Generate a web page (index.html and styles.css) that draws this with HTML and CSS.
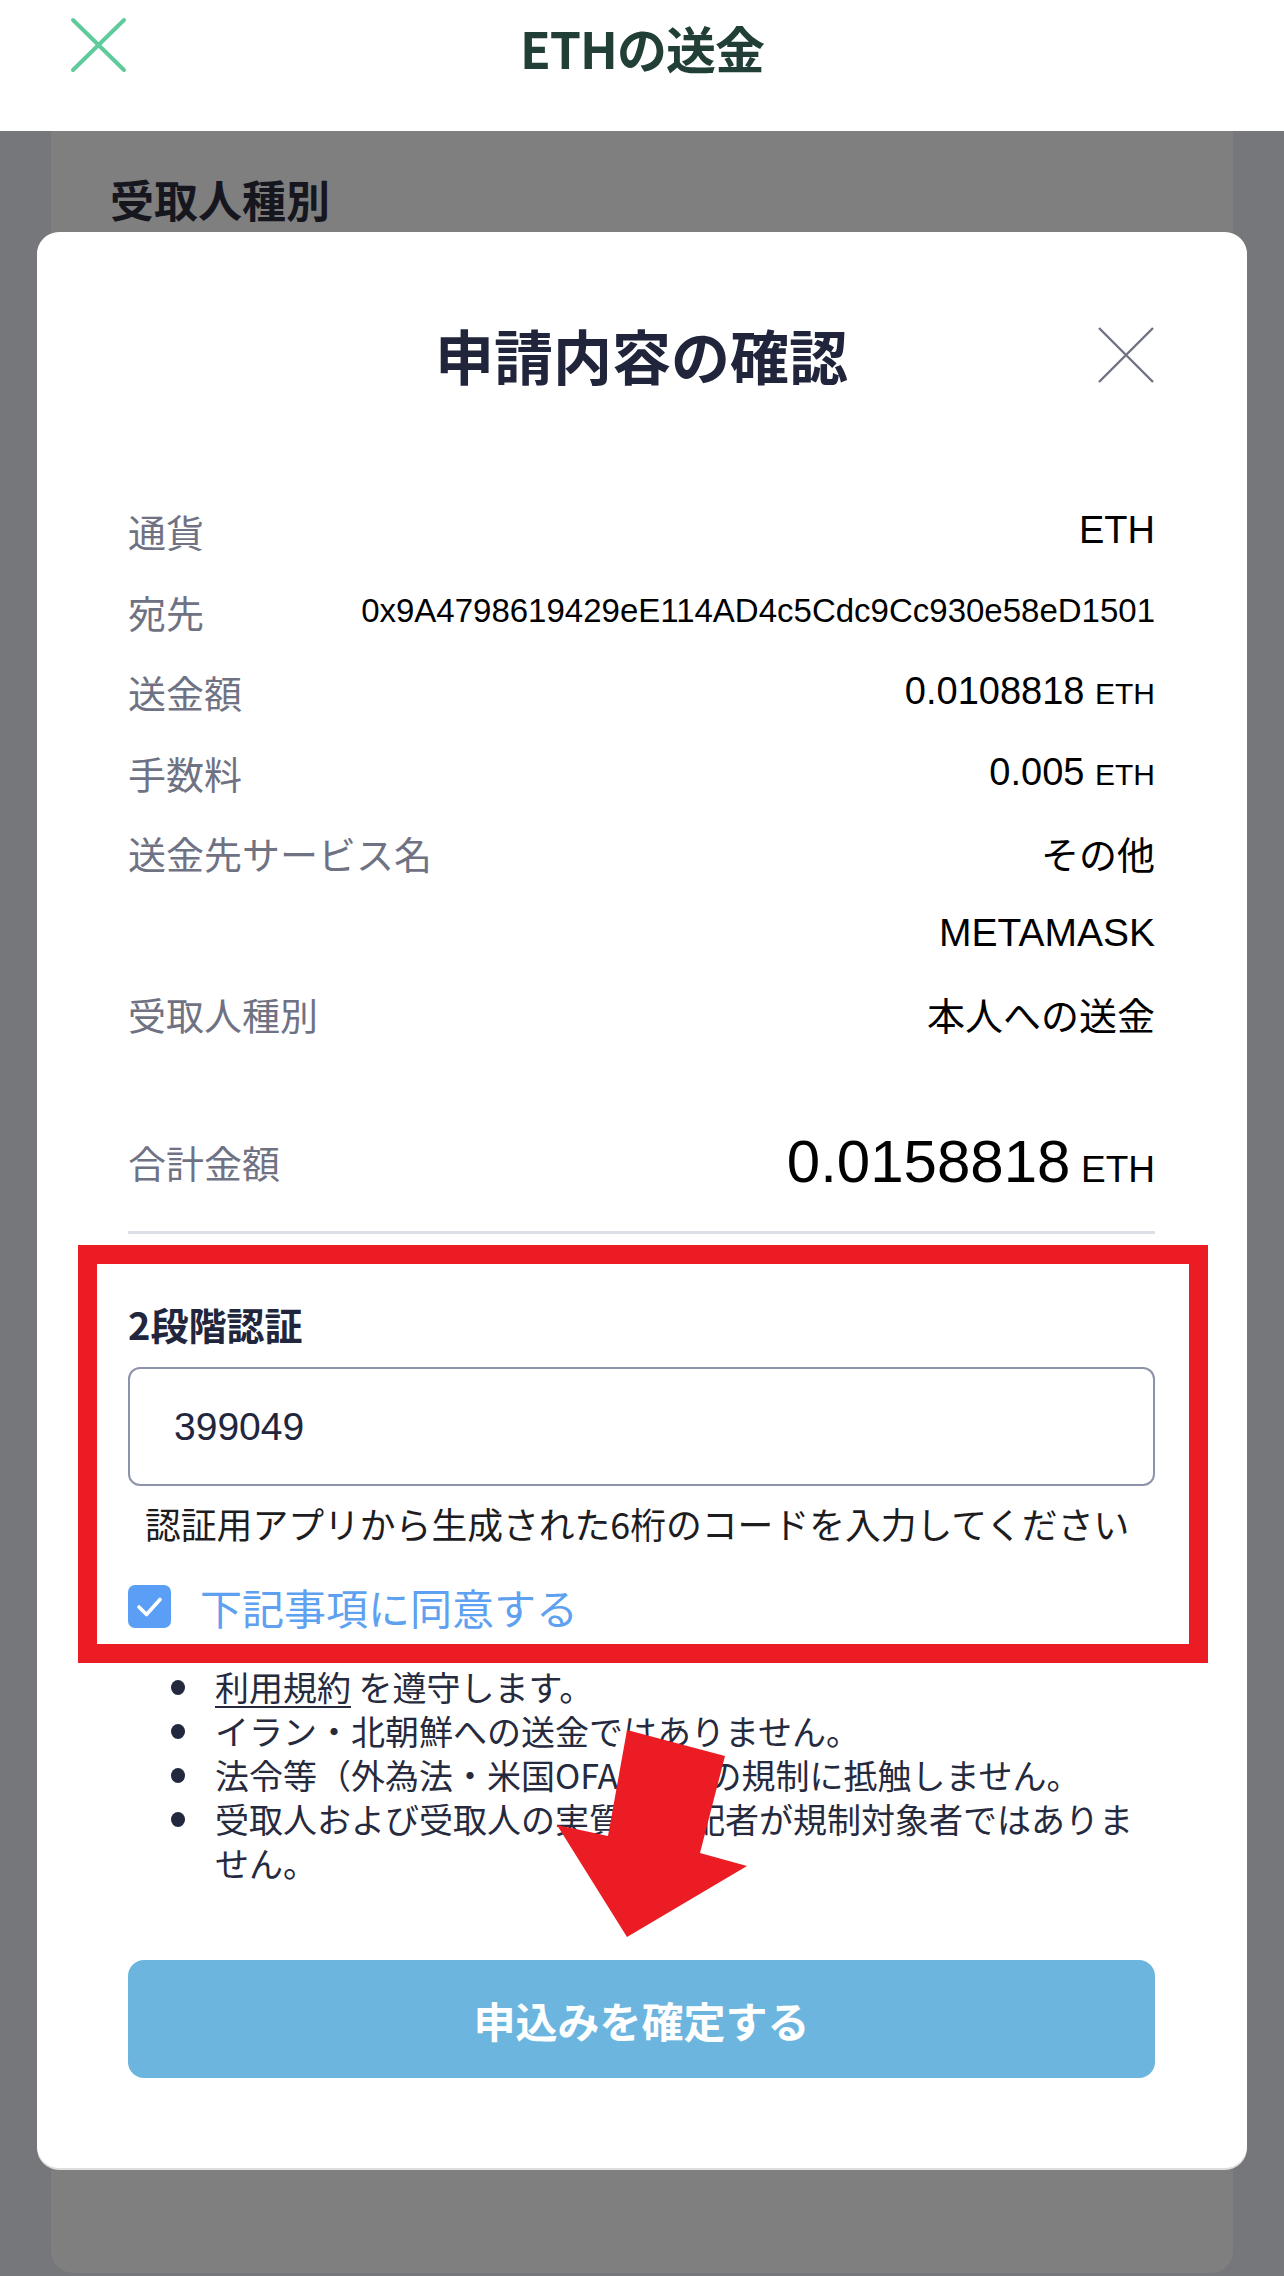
FILE: index.html
```html
<!DOCTYPE html>
<html lang="ja">
<head>
<meta charset="utf-8">
<title>ETHの送金</title>
<link rel="stylesheet" href="styles.css">
</head>
<body>
<div class="page">
  <header class="topbar">
    <svg class="top-close" viewBox="0 0 57 56" width="57" height="56" aria-hidden="true">
      <path d="M3 3 L54 53 M54 3 L3 53" stroke="#5fcb9b" stroke-width="4" stroke-linecap="round" fill="none"/>
    </svg>
    <div class="top-title">ETHの送金</div>
    <div class="top-spacer"></div>
  </header>

  <div class="backdrop">
    <section class="bgcard">
      <h2 class="bg-heading">受取人種別</h2>
    </section>
  </div>

  <div class="modal">
    <div class="modal-head">
      <div class="head-spacer"></div>
      <h1 class="modal-title">申請内容の確認</h1>
      <svg class="modal-close" viewBox="0 0 58 58" width="58" height="58" aria-hidden="true">
        <path d="M2 2 L56 56 M56 2 L2 56" stroke="#6f7282" stroke-width="2.4" fill="none"/>
      </svg>
    </div>

    <div class="rows">
      <div class="row"><span class="label">通貨</span><span class="value">ETH</span></div>
      <div class="row"><span class="label">宛先</span><span class="value addr">0x9A4798619429eE114AD4c5Cdc9Cc930e58eD1501</span></div>
      <div class="row"><span class="label">送金額</span><span class="value">0.0108818 <span class="unit">ETH</span></span></div>
      <div class="row"><span class="label">手数料</span><span class="value">0.005 <span class="unit">ETH</span></span></div>
      <div class="row"><span class="label">送金先サービス名</span><span class="value">その他</span></div>
      <div class="row"><span class="label"></span><span class="value wide">METAMASK</span></div>
      <div class="row"><span class="label">受取人種別</span><span class="value">本人への送金</span></div>
    </div>

    <div class="row total"><span class="label">合計金額</span><span class="value"><span class="big">0.0158818</span> <span class="unit-big">ETH</span></span></div>
    <div class="rule"></div>

    <section class="tfa">
      <h3 class="tfa-title">2段階認証</h3>
      <div class="code">399049</div>
      <p class="hint">認証用アプリから生成された6桁のコードを入力してください</p>
      <div class="agree">
        <span class="checkbox">
          <svg viewBox="0 0 43 43" width="43" height="43" aria-hidden="true">
            <path d="M11 22 L18.5 29.5 L32 14.5" stroke="#fff" stroke-width="3.6" stroke-linecap="round" stroke-linejoin="round" fill="none"/>
          </svg>
        </span>
        <span class="agree-text">下記事項に同意する</span>
      </div>
    </section>

    <ul class="terms">
      <li><span class="link">利用規約</span> を遵守します。</li>
      <li>イラン・北朝鮮への送金ではありません。</li>
      <li>法令等（外為法・米国OFAC等）の規制に抵触しません。</li>
      <li>受取人および受取人の実質的支配者が規制対象者ではありません。</li>
    </ul>

    <div class="submit">申込みを確定する</div>
  </div>

  <svg class="arrow" viewBox="0 0 205 218" width="205" height="218" aria-hidden="true">
    <polygon points="77,5 175,31 150,128 197,141 77,212 7,100 58,111" fill="#ec1c24"/>
  </svg>
</div>
</body>
</html>
```

FILE: styles.css
```css
* { box-sizing: border-box; }

html, body {
  margin: 0;
  padding: 0;
}

body {
  width: 1284px;
  height: 2276px;
  overflow: hidden;
  background: #76777a;
  font-family: "Noto Sans CJK JP", sans-serif;
}

.page {
  position: relative;
  height: 2276px;
}

/* top bar */
.topbar {
  height: 131px;
  background: #fff;
  display: grid;
  grid-template-columns: 1fr auto 1fr;
  align-items: start;
  padding: 17px 70px 0;
}

.top-close { display: block; }

.top-title {
  font-size: 50px;
  line-height: 60px;
  font-weight: 700;
  color: #213f36;
  letter-spacing: -1px;
}

/* dimmed page behind */
.backdrop {
  padding: 0 51px;
}

.bgcard {
  height: 2142px;
  background: #7f7f7f;
  border-radius: 0 0 22px 22px;
  padding: 38px 0 0 59px;
}

.bg-heading {
  margin: 0;
  font-size: 44px;
  line-height: 60px;
  font-weight: 700;
  color: #16161f;
}

/* modal */
.modal {
  position: absolute;
  left: 37px;
  top: 232px;
  width: 1210px;
  background: #fff;
  border-radius: 22px;
  padding: 83px 92px 90px 91px;
  box-shadow: 0 2px 0 #dedede;
}

.modal-head {
  display: grid;
  grid-template-columns: 1fr auto 1fr;
  align-items: center;
  height: 80px;
}

.modal-title {
  margin: 0;
  font-size: 59px;
  line-height: 80px;
  font-weight: 700;
  color: #21253c;
}

.modal-close {
  justify-self: end;
  display: block;
}

.rows {
  margin-top: 95.5px;
}

.row {
  display: flex;
  justify-content: space-between;
  align-items: center;
  height: 80.5px;
}

.label {
  font-size: 38px;
  color: #6f7283;
  white-space: nowrap;
}

.value {
  font-family: "Liberation Sans", "Noto Sans CJK JP", sans-serif;
  font-size: 38px;
  color: #000;
  white-space: nowrap;
}

.value.addr {
  font-size: 33px;
}

.value.wide {
  font-size: 39px;
}

.unit {
  font-size: 30px;
}

.total {
  margin-top: 57px;
  height: 100px;
}

.big {
  font-size: 60px;
}

.unit-big {
  font-size: 37px;
}

.rule {
  margin-top: 20px;
  height: 3px;
  background: #dcdfe6;
}

/* two-factor block (highlighted) */
.tfa {
  margin: 11px -53px 0 -50px;
  border: 19px solid #ec1c24;
  padding: 35px 34px 13px 31px;
}

.tfa-title {
  margin: 0;
  font-size: 38px;
  line-height: 50px;
  font-weight: 700;
  color: #22263d;
}

.code {
  margin-top: 18px;
  height: 119px;
  border: 2px solid #8d93ab;
  border-radius: 12px;
  padding-left: 44px;
  display: flex;
  align-items: center;
  font-family: "Liberation Sans", sans-serif;
  font-size: 39px;
  color: #22263d;
}

.hint {
  margin: 12px 0 0;
  padding-left: 17px;
  font-size: 35.8px;
  line-height: 50px;
  color: #1d1d1f;
  white-space: nowrap;
}

.agree {
  margin-top: 33px;
  height: 50px;
  display: flex;
  align-items: center;
  gap: 29px;
}

.checkbox {
  width: 43px;
  height: 43px;
  border-radius: 7px;
  background: #5b9ef5;
  display: block;
}

.checkbox svg { display: block; }

.agree-text {
  font-size: 42px;
  color: #5fa1f1;
}

/* terms list */
.terms {
  margin: 2px 0 0;
  padding: 0 11px 0 87px;
  list-style: none;
}

.terms li {
  position: relative;
  font-size: 34px;
  line-height: 44px;
  color: #262a3e;
}

.terms li::before {
  content: "";
  position: absolute;
  left: -44px;
  top: 15px;
  width: 14px;
  height: 15px;
  border-radius: 50%;
  background: #23283f;
}

.link {
  text-decoration: underline;
  text-underline-offset: 5px;
  text-decoration-thickness: 2px;
}

.submit {
  margin-top: 75px;
  height: 118px;
  border-radius: 16px;
  background: #6cb5df;
  display: flex;
  align-items: center;
  justify-content: center;
  color: #fff;
  font-size: 42px;
  font-weight: 700;
}

/* annotation arrow */
.arrow {
  position: absolute;
  left: 550px;
  top: 1725px;
  z-index: 5;
}
```
